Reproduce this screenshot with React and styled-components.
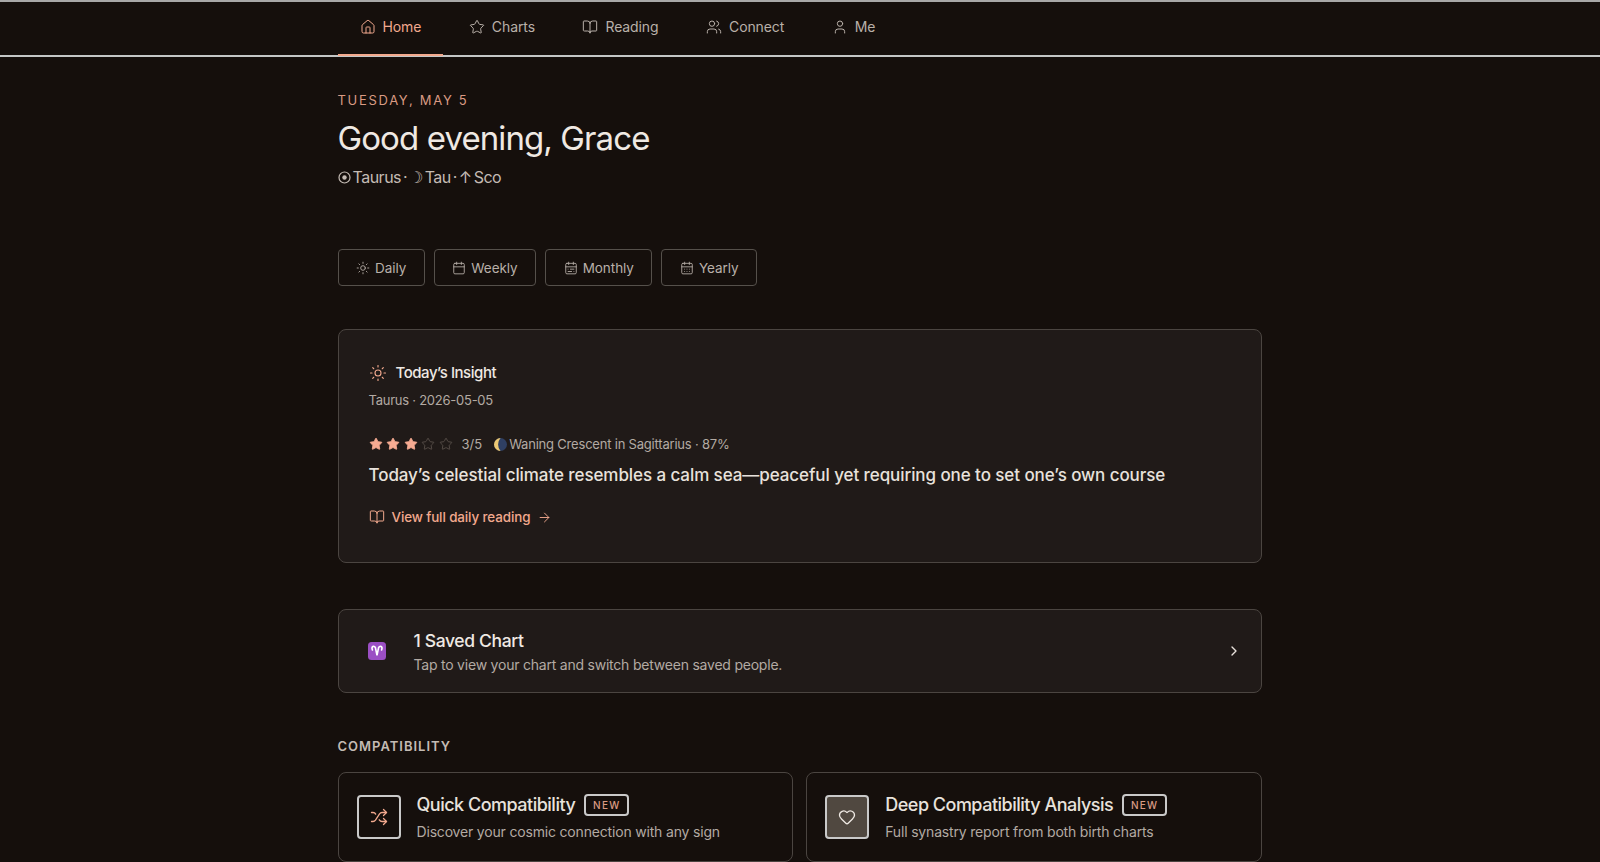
import React from 'react';
import styled, { createGlobalStyle } from 'styled-components';
import {
  House,
  Star,
  BookOpen,
  Users,
  User,
  Sun,
  Calendar,
  CalendarDays,
  CalendarRange,
  ArrowRight,
  ChevronRight,
  Shuffle,
  Heart,
} from 'lucide-react';

const GlobalStyle = createGlobalStyle`
  html, body {
    margin: 0;
    height: 862px;
    overflow: hidden;
    background: #150f0c;
    color: #e8e2dc;
    font-family: Inter, "Noto Sans", sans-serif;
  }
  * {
    box-sizing: border-box;
  }
`;

const NAV_ITEMS = [
  { label: 'Home', icon: House, active: true },
  { label: 'Charts', icon: Star },
  { label: 'Reading', icon: BookOpen },
  { label: 'Connect', icon: Users },
  { label: 'Me', icon: User },
];

const TABS = [
  { label: 'Daily', icon: Sun },
  { label: 'Weekly', icon: Calendar },
  { label: 'Monthly', icon: CalendarRange },
  { label: 'Yearly', icon: CalendarDays },
];

const SIGN_PARTS = ['Taurus', '·', '☽', 'Tau', '·', '↑', 'Sco'];

function AriesBadge() {
  return (
    <svg width="18" height="18" viewBox="0 0 18 18">
      <rect width="18" height="18" rx="3.5" fill="#9b4fc4" />
      <path
        d="M4.4 8C3 4.5 6 3 7.4 5.6L9 13.4L10.6 5.6C12 3 15 4.5 13.6 8"
        fill="none"
        stroke="#fff"
        strokeWidth="1.6"
        strokeLinecap="round"
      />
    </svg>
  );
}

function MoonPhase() {
  return (
    <svg width="13" height="13" viewBox="0 0 13 13">
      <circle cx="6.5" cy="6.5" r="6.5" fill="#2f3f62" />
      <path d="M6.5 0A6.5 6.5 0 0 0 6.5 13A10 10 0 0 1 6.5 0Z" fill="#ecc873" />
    </svg>
  );
}

function SunMark() {
  return (
    <svg width="13" height="13" viewBox="0 0 13 13">
      <circle cx="6.5" cy="6.5" r="5.5" fill="none" stroke="currentColor" strokeWidth="1.2" />
      <circle cx="6.5" cy="6.5" r="2.2" fill="currentColor" />
    </svg>
  );
}

function App() {
  return (
    <>
      <GlobalStyle />
      <TopNav>
        <NavInner>
          {NAV_ITEMS.map(({ label, icon: Icon, active }) => (
            <NavItem key={label} $active={active}>
              <Icon size={16} strokeWidth={1.5} />
              {label}
            </NavItem>
          ))}
        </NavInner>
      </TopNav>

      <Main>
        <DateLine>TUESDAY, MAY 5</DateLine>
        <Greeting>Good evening, Grace</Greeting>
        <SignLine>
          <SunMark />
          {SIGN_PARTS.map((part, i) => (
            <span key={i}>{part}</span>
          ))}
        </SignLine>

        <TabRow>
          {TABS.map(({ label, icon: Icon }) => (
            <Tab key={label}>
              <Icon size={14} strokeWidth={1.5} />
              {label}
            </Tab>
          ))}
        </TabRow>

        <InsightCard>
          <InsightHead>
            <Sun size={18} strokeWidth={1.5} color="#f2a98e" />
            Today’s Insight
          </InsightHead>
          <InsightMeta>Taurus · 2026-05-05</InsightMeta>
          <RatingRow>
            <Stars>
              {[1, 2, 3, 4, 5].map((n) => (
                <Star
                  key={n}
                  size={14}
                  strokeWidth={1.5}
                  color={n <= 3 ? '#f6ab92' : '#5a514b'}
                  fill={n <= 3 ? '#f6ab92' : 'none'}
                />
              ))}
            </Stars>
            <Score>3/5</Score>
            <MoonText>
              <MoonPhase />
              Waning Crescent in Sagittarius · 87%
            </MoonText>
          </RatingRow>
          <InsightBody>
            Today’s celestial climate resembles a calm sea—peaceful yet requiring one to set one’s own course
          </InsightBody>
          <ReadLink>
            <BookOpen size={16} strokeWidth={1.5} />
            View full daily reading
            <ArrowRight size={15} strokeWidth={1.5} />
          </ReadLink>
        </InsightCard>

        <SavedCard>
          <AriesBadge />
          <SavedText>
            <SavedTitle>1 Saved Chart</SavedTitle>
            <SavedSub>Tap to view your chart and switch between saved people.</SavedSub>
          </SavedText>
          <ChevronRight size={16} strokeWidth={2} color="#e8e2dc" />
        </SavedCard>

        <SectionLabel>COMPATIBILITY</SectionLabel>
        <CompatGrid>
          <CompatCard>
            <IconBox>
              <Shuffle size={18} strokeWidth={1.75} color="#f2a98e" />
            </IconBox>
            <div>
              <CompatTitle>
                Quick Compatibility
                <NewBadge>NEW</NewBadge>
              </CompatTitle>
              <CompatSub>Discover your cosmic connection with any sign</CompatSub>
            </div>
          </CompatCard>
          <CompatCard>
            <IconBox $filled>
              <Heart size={18} strokeWidth={1.75} color="#efe9e3" />
            </IconBox>
            <div>
              <CompatTitle>
                Deep Compatibility Analysis
                <NewBadge>NEW</NewBadge>
              </CompatTitle>
              <CompatSub>Full synastry report from both birth charts</CompatSub>
            </div>
          </CompatCard>
        </CompatGrid>
      </Main>
    </>
  );
}

const TopNav = styled.nav`
  height: 57px;
  border-top: 2px solid #a8a8a8;
  border-bottom: 2px solid #c4c6c6;
`;

const NavInner = styled.div`
  width: 924px;
  height: 100%;
  margin-left: calc(50% - 462.5px);
  display: flex;
  gap: 3.5px;
`;

const NavItem = styled.a`
  display: flex;
  align-items: center;
  gap: 7px;
  height: 54px;
  padding: 0 22px 3px;
  font-size: 14px;
  font-weight: 400;
  letter-spacing: -0.1px;
  color: ${(p) => (p.$active ? '#f2a98e' : '#b9b0a9')};
  border-bottom: 2px solid ${(p) => (p.$active ? '#f2a98e' : 'transparent')};
`;

const Main = styled.main`
  width: 924px;
  margin-left: calc(50% - 462.5px);
  padding-top: 35px;
`;

const DateLine = styled.div`
  font-size: 13px;
  line-height: 16px;
  letter-spacing: 1.7px;
  color: #d99a83;
`;

const Greeting = styled.h1`
  margin: 8px 0 0;
  font-size: 33px;
  line-height: 44px;
  font-weight: 400;
  letter-spacing: -0.9px;
  color: #efe9e3;
`;

const SignLine = styled.div`
  display: flex;
  align-items: center;
  gap: 2px;
  margin-top: 5px;
  font-size: 16px;
  line-height: 24px;
  letter-spacing: -0.5px;
  color: #c4bbb4;
`;

const TabRow = styled.div`
  display: flex;
  gap: 9px;
  margin-top: 60px;
`;

const Tab = styled.button`
  display: flex;
  align-items: center;
  gap: 5px;
  height: 37px;
  padding: 0 17.5px;
  font: 400 13.5px Inter, sans-serif;
  letter-spacing: -0.05px;
  color: #b9b0a9;
  background: transparent;
  border: 1px solid #55504b;
  border-radius: 4px;
`;

const InsightCard = styled.section`
  height: 234px;
  margin-top: 43px;
  padding: 32px 30px;
  background: #201a18;
  border: 1px solid #4b4541;
  border-radius: 8px;
`;

const InsightHead = styled.div`
  display: flex;
  align-items: center;
  gap: 9px;
  font-size: 15px;
  line-height: 22px;
  font-weight: 500;
  letter-spacing: -0.45px;
  color: #efe9e3;
`;

const InsightMeta = styled.div`
  margin-top: 6px;
  font-size: 13px;
  line-height: 20px;
  letter-spacing: -0.25px;
  color: #b3aaa3;
`;

const RatingRow = styled.div`
  display: flex;
  align-items: center;
  margin-top: 24px;
  font-size: 13px;
  line-height: 20px;
  color: #b3aaa3;
`;

const Stars = styled.div`
  display: flex;
  gap: 3.5px;
`;

const Score = styled.span`
  margin: 0 12px 0 9px;
`;

const MoonText = styled.span`
  display: flex;
  align-items: center;
  gap: 2px;
  letter-spacing: -0.2px;
`;

const InsightBody = styled.p`
  margin: 7px 0 0;
  font-size: 17px;
  line-height: 28px;
  font-weight: 500;
  letter-spacing: -0.08px;
  color: #e8e2dc;
`;

const ReadLink = styled.a`
  display: flex;
  align-items: center;
  gap: 7px;
  margin-top: 18px;
  font-size: 13.4px;
  line-height: 20px;
  font-weight: 500;
  letter-spacing: -0.1px;
  color: #f2a98e;
`;

const SavedCard = styled.section`
  display: flex;
  align-items: center;
  height: 84px;
  margin-top: 46px;
  padding: 0 19px 0 29px;
  background: #201a18;
  border: 1px solid #4b4541;
  border-radius: 8px;
`;

const SavedText = styled.div`
  flex: 1;
  margin: 2px 0 0 28px;
`;

const SavedTitle = styled.div`
  font-size: 17.5px;
  line-height: 26px;
  font-weight: 500;
  letter-spacing: -0.35px;
  color: #efe9e3;
`;

const SavedSub = styled.div`
  font-size: 14px;
  line-height: 22px;
  letter-spacing: -0.22px;
  color: #b3aaa3;
`;

const SectionLabel = styled.h2`
  margin: 44px 0 0;
  font-size: 13px;
  line-height: 18px;
  font-weight: 600;
  letter-spacing: 1px;
  color: #c4bbb4;
`;

const CompatGrid = styled.div`
  display: grid;
  grid-template-columns: 1fr 1fr;
  gap: 13.5px;
  margin-top: 17px;
`;

const CompatCard = styled.article`
  display: flex;
  align-items: center;
  gap: 16px;
  height: 90px;
  padding: 0 18px;
  border: 1px solid #4b4541;
  border-radius: 8px;
`;

const IconBox = styled.div`
  display: flex;
  align-items: center;
  justify-content: center;
  width: 44px;
  height: 44px;
  flex: none;
  background: ${(p) => (p.$filled ? '#504840' : 'transparent')};
  border: 2px solid #c9c9c9;
  border-radius: 4px;
`;

const CompatTitle = styled.div`
  display: flex;
  align-items: center;
  gap: 9px;
  font-size: 18px;
  line-height: 24px;
  font-weight: 500;
  letter-spacing: -0.5px;
  color: #e8e2dc;
`;

const NewBadge = styled.span`
  display: flex;
  align-items: center;
  justify-content: center;
  width: 45px;
  height: 22px;
  font-size: 10px;
  font-weight: 500;
  letter-spacing: 1.3px;
  color: #d99a83;
  border: 2px solid #c9c9c9;
  border-radius: 4px;
`;

const CompatSub = styled.div`
  margin-top: 5px;
  font-size: 14px;
  line-height: 20px;
  letter-spacing: -0.18px;
  color: #b3aaa3;
`;

export default App;
